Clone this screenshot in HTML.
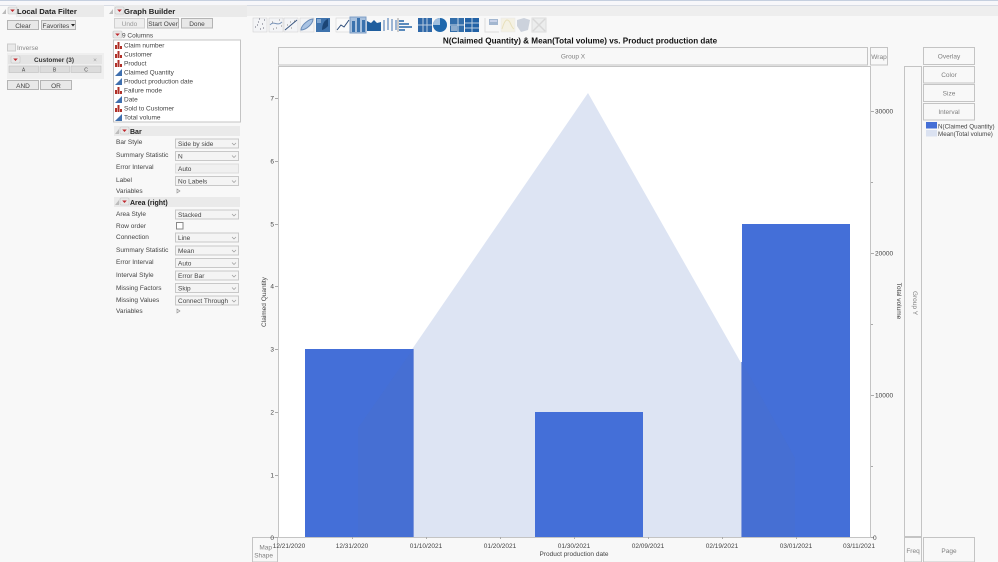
<!DOCTYPE html>
<html><head><meta charset="utf-8"><style>
html,body{margin:0;padding:0;background:#f8f8f8;width:998px;height:562px;overflow:hidden}
svg{display:block;filter:blur(.3px)}
text{font-family:"Liberation Sans",sans-serif;font-size:6.5px;fill:#444}
.h{font-size:7.7px;font-weight:bold;fill:#222}
.b{fill:#e8e8e8;stroke:#b4b4b4;stroke-width:1}
.g{fill:#f4f4f4;stroke:#c8c8c8;stroke-width:1}
.d{fill:#eeeeee;stroke:#d0d0d0;stroke-width:1}
.z{fill:#f8f8f8;stroke:#c4c4c4;stroke-width:1}
.m{text-anchor:middle}
.e{text-anchor:end}
.gt{fill:#808080;font-size:6.5px;text-anchor:middle}
.hb{fill:#eaeaea}
.t{stroke:#aaa;stroke-width:1}
</style></head><body>
<svg width="998" height="562" viewBox="0 0 998 562" xmlns="http://www.w3.org/2000/svg">
<defs>
<g id="r"><rect x="0" y="0" width="9" height="7" rx="1" fill="#e8e8e8" stroke="#c4c4c4" stroke-width=".6"/><path d="M2.2 2.5h4.6L4.5 5z" fill="#c0272d"/></g>
<g id="n"><path d="M0 7V3h2v4zM2.5 7V0h2v7zM5 7V4h2v3z" fill="#b03028"/></g>
<g id="c"><path d="M0 7L7 0v7z" fill="#3f6fae"/></g>
<path id="a" d="M0 0v5l-4 0z" fill="#bbb"/>
<path id="w" d="M2 1l3 2-3 2z" fill="#f2f2f2" stroke="#888" stroke-width=".6"/>
</defs>
<rect width="998" height="562" fill="#f8f8f8"/>
<rect x="0" y="0" width="998" height="1" fill="#c5cfdf"/>
<rect x="0" y="1" width="998" height="4" fill="#f7f7fa"/>
<rect x="0" y="5" width="998" height="1" fill="#d8dce4"/>
<rect x="246" y="6" width="752" height="10" fill="#eeeeee"/>

<!-- Local data filter -->
<use href="#a" x="6" y="9"/>
<rect x="16" y="5" width="88" height="12" class="hb"/>
<use href="#r" x="8" y="7"/>
<text x="17" y="14" class="h">Local Data Filter</text>
<rect x="7.500" y="20.500" width="31" height="9" class="b"/><text x="23" y="28" class="m">Clear</text>
<rect x="41.500" y="20.500" width="34" height="9" class="b"/><text x="42.500" y="28">Favorites</text><path d="M71 24h4l-2 2.500z" fill="#222"/>
<rect x="7.500" y="44" width="8" height="7" fill="#e9e9e9" stroke="#ccc"/><text x="17" y="50" style="fill:#888">Inverse</text>
<rect x="7" y="53" width="97" height="26" fill="#efefef"/>
<rect x="8" y="55" width="94" height="9" fill="#e4e4e4"/>
<use href="#r" x="11" y="56"/>
<text x="54" y="62" class="m" style="font-weight:bold;fill:#333">Customer (3)</text>
<text x="95" y="62" class="m" style="fill:#999">×</text>
<rect x="9" y="66" width="29.500" height="6.500" fill="#dcdcdc" stroke="#b8b8b8" stroke-width=".5"/><text x="23.500" y="71.500" class="m" style="font-size:5px">A</text>
<rect x="40" y="66" width="29.500" height="6.500" fill="#dcdcdc" stroke="#b8b8b8" stroke-width=".5"/><text x="54.500" y="71.500" class="m" style="font-size:5px">B</text>
<rect x="71" y="66" width="30" height="6.500" fill="#dcdcdc" stroke="#b8b8b8" stroke-width=".5"/><text x="86" y="71.500" class="m" style="font-size:5px">C</text>
<rect x="7.500" y="80.500" width="31" height="9" class="b"/><text x="23" y="88" class="m">AND</text>
<rect x="40.500" y="80.500" width="31" height="9" class="b"/><text x="56" y="88" class="m">OR</text>

<!-- Graph builder -->
<use href="#a" x="113" y="9"/>
<rect x="114" y="5" width="133" height="12" class="hb"/>
<use href="#r" x="115" y="7"/>
<text x="124" y="14" class="h">Graph Builder</text>
<rect x="114.500" y="18.500" width="30" height="9.500" class="d"/><text x="129.500" y="26" class="m" style="fill:#999">Undo</text>
<rect x="147.500" y="18.500" width="31" height="9.500" class="b"/><text x="163" y="26" class="m">Start Over</text>
<rect x="181.500" y="18.500" width="31" height="9.500" class="b"/><text x="197" y="26" class="m">Done</text>
<use href="#r" x="113" y="31"/><text x="122" y="37.500">9 Columns</text>
<rect x="113.500" y="40" width="127" height="82" fill="#fff" stroke="#c4c4c4"/>
<use href="#n" x="115" y="42"/><text x="124" y="47.500">Claim number</text>
<use href="#n" x="115" y="51"/><text x="124" y="56.500">Customer</text>
<use href="#n" x="115" y="60"/><text x="124" y="65.500">Product</text>
<use href="#c" x="115" y="69"/><text x="124" y="74.500">Claimed Quantity</text>
<use href="#c" x="115" y="78"/><text x="124" y="83.500">Product production date</text>
<use href="#n" x="115" y="87"/><text x="124" y="92.500">Failure mode</text>
<use href="#c" x="115" y="96"/><text x="124" y="101.500">Date</text>
<use href="#n" x="115" y="105"/><text x="124" y="110.500">Sold to Customer</text>
<use href="#c" x="115" y="114"/><text x="124" y="119.500">Total volume</text>

<!-- Bar panel -->
<rect x="114" y="126" width="126" height="10" class="hb"/>
<use href="#a" x="119" y="129"/><use href="#r" x="120" y="127"/><text x="130" y="134" class="h" style="font-size:7px">Bar</text>
<text x="116" y="144">Bar Style</text><rect x="175.500" y="139" width="63" height="9" class="g"/><text x="178" y="146">Side by side</text><path d="M232 143l2 2 2-2" fill="none" stroke="#999" stroke-width=".7"/>
<text x="116" y="157">Summary Statistic</text><rect x="175.500" y="151.500" width="63" height="9" class="g"/><text x="178" y="158.500">N</text><path d="M232 155.500l2 2 2-2" fill="none" stroke="#999" stroke-width=".7"/>
<text x="116" y="169">Error Interval</text><rect x="175.500" y="164" width="63" height="9" fill="#f0f0f0" stroke="#ddd"/><text x="178" y="171">Auto</text>
<text x="116" y="182">Label</text><rect x="175.500" y="176.500" width="63" height="9" class="g"/><text x="178" y="183.500">No Labels</text><path d="M232 180.500l2 2 2-2" fill="none" stroke="#999" stroke-width=".7"/>
<text x="116" y="193">Variables</text><use href="#w" x="175" y="188"/>

<!-- Area panel -->
<rect x="114" y="197" width="126" height="10" class="hb"/>
<use href="#a" x="119" y="200"/><use href="#r" x="120" y="198"/><text x="130" y="205" class="h" style="font-size:7px">Area (right)</text>
<text x="116" y="216">Area Style</text><rect x="175.500" y="210" width="63" height="9" class="g"/><text x="178" y="217">Stacked</text><path d="M232 214l2 2 2-2" fill="none" stroke="#999" stroke-width=".7"/>
<text x="116" y="228">Row order</text><rect x="176.500" y="222.500" width="6.500" height="6.500" fill="#fff" stroke="#888"/>
<text x="116" y="239">Connection</text><rect x="175.500" y="233" width="63" height="9" class="g"/><text x="178" y="240">Line</text><path d="M232 237l2 2 2-2" fill="none" stroke="#999" stroke-width=".7"/>
<text x="116" y="252">Summary Statistic</text><rect x="175.500" y="246" width="63" height="9" class="g"/><text x="178" y="253">Mean</text><path d="M232 250l2 2 2-2" fill="none" stroke="#999" stroke-width=".7"/>
<text x="116" y="264">Error Interval</text><rect x="175.500" y="258.500" width="63" height="9" class="g"/><text x="178" y="265.500">Auto</text><path d="M232 262.500l2 2 2-2" fill="none" stroke="#999" stroke-width=".7"/>
<text x="116" y="277">Interval Style</text><rect x="175.500" y="271" width="63" height="9" class="g"/><text x="178" y="278">Error Bar</text><path d="M232 275l2 2 2-2" fill="none" stroke="#999" stroke-width=".7"/>
<text x="116" y="290">Missing Factors</text><rect x="175.500" y="283.500" width="63" height="9" class="g"/><text x="178" y="290.500">Skip</text><path d="M232 287.500l2 2 2-2" fill="none" stroke="#999" stroke-width=".7"/>
<text x="116" y="302">Missing Values</text><rect x="175.500" y="296" width="63" height="9" class="g"/><text x="178" y="303">Connect Through</text><path d="M232 300l2 2 2-2" fill="none" stroke="#999" stroke-width=".7"/>
<text x="116" y="313">Variables</text><use href="#w" x="175" y="308"/>

<!-- Toolbar icons -->
<g fill="none" stroke-width="1">
<rect x="253" y="18" width="14" height="14" fill="#f3f4f6" stroke="#ccc" stroke-width=".5"/>
<path d="M255 27h1M258 22h1M260 29h1M262 24h1M264 20h1M257 25h1M263 28h1M259 19h1" stroke="#667"/>
<rect x="269" y="18" width="14" height="14" fill="#f3f4f6" stroke="#ccc" stroke-width=".5"/>
<path d="M270 25c4-5 7 2 12-3" stroke="#7a94b8"/><path d="M272 22h1M276 28h1M279 20h1M273 29h1M281 26h1" stroke="#888"/>
<rect x="284" y="18" width="14" height="14" fill="#f3f4f6" stroke="#ccc" stroke-width=".5"/>
<path d="M285 30L297 20" stroke="#3a5680"/><path d="M287 25h1M291 28h1M294 21h1M290 22h1" stroke="#888"/>
<rect x="300" y="18" width="14" height="14" fill="#f3f4f6" stroke="#ccc" stroke-width=".5"/>
<path d="M301 30c0-5 8-11 12-11 0 5-7 11-12 11z" fill="#a9c3e3" stroke="#6a8cb8"/>
<rect x="316" y="18" width="14" height="14" fill="#3f73ad"/>
<path d="M322 30c0-5 2-10 6-11v7c-2 2-3 3-6 4z" fill="#1b4576"/><path d="M317 19h4v4h-4z" fill="#82a6cf"/>
<rect x="336" y="18" width="14" height="14" fill="#fafafa" stroke="#ccc" stroke-width=".5"/>
<path d="M337 30l4-5 3 2 5-7" stroke="#2a4a78" stroke-width="1"/>
<rect x="350" y="17" width="16" height="16" fill="#a8c1de" stroke="#7c9cc3"/>
<path d="M352 32V21h3v11zM357 32V18h3v14zM362 32V20h3v12z" fill="#3a72ae"/>
<path d="M367 31V21l4 2 3-3 3 3 4-1v9z" fill="#1f5e9e"/>
<path d="M384 20v11M388 18v12M392 19v12M396 20v10" stroke="#9cb5d4" stroke-width="2"/>
<path d="M398 18v14" stroke="#777" stroke-width=".7"/><path d="M399 20h5v2h-5zM399 23h10v2h-10zM399 26h13v2h-13zM399 29h6v2h-6z" fill="#5a8abc"/>
<rect x="418" y="18" width="14" height="14" fill="#2f68a8"/><path d="M423 18v14M427 18v14M418 25h14" stroke="#b8cbe0"/>
<circle cx="440" cy="25" r="7" fill="#2068ac"/><path d="M440 25V18a7 7 0 0 0-7 7z" fill="#9fbfdf"/>
<rect x="450" y="18" width="14" height="14" fill="#336eaa"/><path d="M450 25h14M458 18v14" stroke="#c8d8e8"/><rect x="451" y="26" width="6" height="5" fill="#8daccd"/>
<rect x="465" y="18" width="14" height="14" fill="#2262a6"/><path d="M465 23h14M472 18v14M465 28h14" stroke="#b8cce0"/>
<path d="M485 18v14h14" stroke="#ddd"/><rect x="489" y="19" width="9" height="6" fill="#a3b7d0"/><path d="M490 21h7" stroke="#eef"/>
<rect x="501" y="18" width="14" height="14" fill="#f4f1e4" stroke="#e8e8e8" stroke-width=".5"/><path d="M502 29c3-10 5-10 7-8s2 6 5 8" stroke="#e8e0bc"/>
<path d="M517 20l7-2 6 2-2 10-7 2-4-6z" fill="#ccd2dc"/>
<rect x="532" y="18" width="14" height="14" fill="#eceded" stroke="#ddd"/><path d="M533 19l12 12M545 19l-12 12" stroke="#d8d8d8" stroke-width="1.500"/>
</g>

<!-- Title -->
<text x="580" y="43.500" class="m" style="font-size:8.150px;font-weight:bold;fill:#111">N(Claimed Quantity) &amp; Mean(Total volume) vs. Product production date</text>

<!-- Drop zones -->
<rect x="278.500" y="47.500" width="589" height="17.500" class="z"/>
<text x="573" y="58.500" class="gt">Group X</text>
<rect x="870.500" y="47.500" width="17" height="17.500" class="z"/>
<text x="879" y="59" class="gt">Wrap</text>
<rect x="904.500" y="66.500" width="17" height="470" class="z"/>
<text x="913" y="303" class="gt" transform="rotate(90 913 303)">Group Y</text>
<rect x="923.500" y="47.500" width="51" height="17" class="z"/><text x="949" y="58.500" class="gt">Overlay</text>
<rect x="923.500" y="66.500" width="51" height="16.500" class="z"/><text x="949" y="77" class="gt">Color</text>
<rect x="923.500" y="84.500" width="51" height="17" class="z"/><text x="949" y="95.500" class="gt">Size</text>
<rect x="923.500" y="103.500" width="51" height="16.500" class="z"/><text x="949" y="114" class="gt">Interval</text>
<rect x="926" y="122" width="11" height="6.500" fill="#456fd6"/><text x="938" y="128.500" style="font-size:6.250px">N(Claimed Quantity)</text>
<rect x="926" y="130" width="11" height="6.500" fill="#dbe2f1"/><text x="938" y="136" style="font-size:6.250px">Mean(Total volume)</text>
<rect x="904.500" y="537.500" width="17" height="24.500" class="z"/><text x="913" y="553" class="gt">Freq</text>
<rect x="923.500" y="537.500" width="51" height="24.500" class="z"/><text x="949" y="553" class="gt">Page</text>
<rect x="252.500" y="537.500" width="25" height="24.500" class="z"/>
<text x="272" y="549.500" class="e" style="fill:#808080">Map</text><text x="273" y="557.500" class="e" style="fill:#808080">Shape</text>

<!-- Plot -->
<rect x="278.500" y="66.500" width="592" height="471" fill="#fff" stroke="#c4c4c4"/>
<polygon points="358,537 358,428 588,93 795,458 795,537" fill="#dde4f3"/>
<rect x="305" y="349" width="108.500" height="188" fill="#446fd8"/>
<rect x="535" y="412" width="108" height="125" fill="#446fd8"/>
<rect x="742" y="224" width="108" height="313" fill="#446fd8"/>
<polygon points="358,537 358,428 413,349 413,537" fill="#466fd3"/>
<polygon points="742,362 795,458 795,537 742,537" fill="#466fd3"/>
<rect x="413" y="349" width="1" height="188" fill="#7e97dc"/>
<rect x="741" y="362" width="1" height="175" fill="#8aa2df"/>

<!-- Left axis -->
<path class="t" d="M275 537.500h3M275 475.500h3M275 412.500h3M275 349.500h3M275 286.500h3M275 224.500h3M275 161.500h3M275 98.500h3"/>
<text x="274" y="540" class="e">0</text><text x="274" y="477.500" class="e">1</text><text x="274" y="414.500" class="e">2</text><text x="274" y="351.500" class="e">3</text><text x="274" y="288.500" class="e">4</text><text x="274" y="226.500" class="e">5</text><text x="274" y="163.500" class="e">6</text><text x="274" y="100.500" class="e">7</text>
<text x="266" y="302" class="m" transform="rotate(-90 266 302)">Claimed Quantity</text>

<!-- Right axis -->
<path class="t" d="M871 537.500h3M871 395.500h3M871 253.500h3M871 111.500h3M871 466.500h2M871 324.500h2M871 182.500h2"/>
<text x="873" y="540">0</text><text x="875" y="397.500">10000</text><text x="875" y="255.500">20000</text><text x="875" y="113.500">30000</text>
<text x="897" y="301" class="m" transform="rotate(90 897 301)">Total volume</text>

<!-- X axis -->
<path class="t" d="M352.500 537v2M426.500 537v2M500.500 537v2M574.500 537v2M648.500 537v2M722.500 537v2M796.500 537v2"/>
<text x="289" y="548" class="m">12/21/2020</text><text x="352" y="548" class="m">12/31/2020</text><text x="426" y="548" class="m">01/10/2021</text><text x="500" y="548" class="m">01/20/2021</text><text x="574" y="548" class="m">01/30/2021</text><text x="648" y="548" class="m">02/09/2021</text><text x="722" y="548" class="m">02/19/2021</text><text x="796" y="548" class="m">03/01/2021</text><text x="859" y="548" class="m">03/11/2021</text>
<text x="574" y="556" class="m">Product production date</text>
</svg>
</body></html>
